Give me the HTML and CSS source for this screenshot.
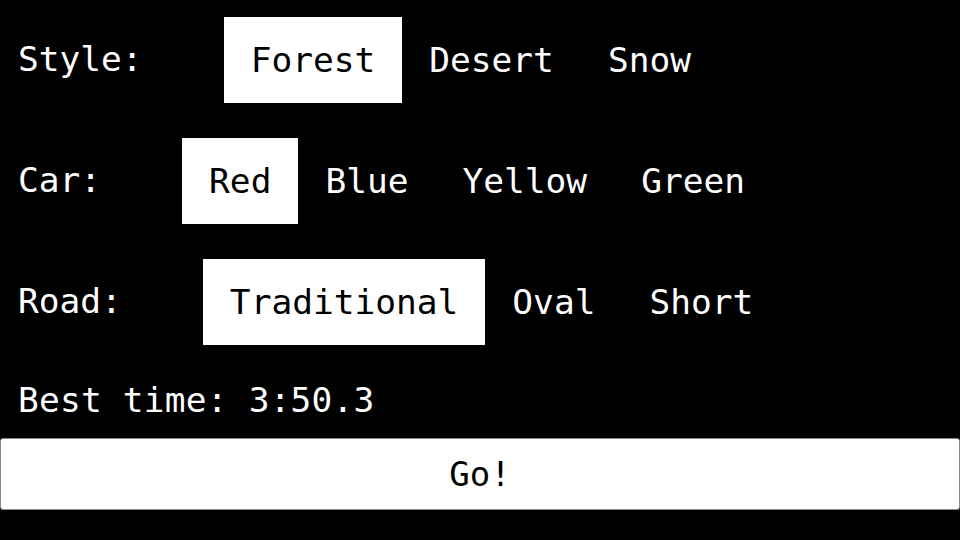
FILE: index.html
```html
<!DOCTYPE html>
<html>
<head>
<meta charset="utf-8">
<link rel="stylesheet" href="styles.css">
</head>
<body>
<div class="menu">
  <div class="row">
    <span class="label">Style:</span>
    <span class="opt selected">Forest</span>
    <span class="opt">Desert</span>
    <span class="opt">Snow</span>
  </div>
  <div class="row">
    <span class="label">Car:</span>
    <span class="opt selected">Red</span>
    <span class="opt">Blue</span>
    <span class="opt">Yellow</span>
    <span class="opt">Green</span>
  </div>
  <div class="row">
    <span class="label">Road:</span>
    <span class="opt selected">Traditional</span>
    <span class="opt">Oval</span>
    <span class="opt">Short</span>
  </div>
  <div class="best">Best time: 3:50.3</div>
</div>
<button class="go">Go!</button>
</body>
</html>
```
FILE: styles.css
```css
html, body {
  margin: 0;
  padding: 0;
  background: #000;
  width: 960px;
  height: 540px;
  overflow: hidden;
}
body {
  font-family: "DejaVu Sans Mono", monospace;
  font-size: 34.5px;
  color: #fff;
}
.menu {
  padding: 17px 0 0 18px;
  display: flex;
  flex-direction: column;
  gap: 35px;
}
.row {
  display: flex;
  align-items: center;
  height: 86px;
}
.label {
  margin-right: 81px;
  line-height: 40px;
  margin-top: -2px;
}
.opt {
  height: 86px;
  padding: 0 27px;
  display: flex;
  align-items: center;
}
.opt.selected {
  background: #fff;
  color: #000;
}
.best {
  line-height: 40px;
  letter-spacing: 0.2px;
}
.go {
  display: block;
  box-sizing: border-box;
  width: 960px;
  height: 72px;
  margin: 18px 0 0 0;
  background: #fff;
  color: #000;
  border: 1px solid #8a8a8a;
  border-radius: 3px;
  font-family: "DejaVu Sans Mono", monospace;
  font-size: 34px;
  padding: 0;
}
```
